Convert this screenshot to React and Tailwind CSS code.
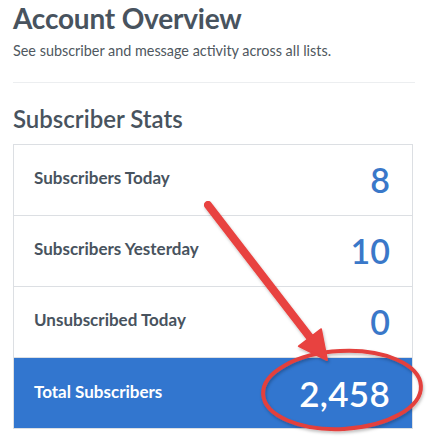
import React from 'react';

const rows = [
  { label: 'Subscribers Today', value: '8' },
  { label: 'Subscribers Yesterday', value: '10' },
  { label: 'Unsubscribed Today', value: '0' },
];

const App = () => {
  return (
    <div className="relative w-[428px] h-[442px] overflow-hidden bg-white font-['Lato',sans-serif] text-[#48535e]">
      <div className="px-[13px]">
        <h1 className="text-[28px] leading-[36px] font-bold tracking-[-0.2px]">Account Overview</h1>
        <p className="mt-[5px] text-[14.4px] leading-[20px] text-[#4f5860]">
          See subscriber and message activity across all lists.
        </p>
        <hr className="mt-[21px] border-0 border-t border-[#eceef0]" />
        <h2 className="mt-[22px] text-[24px] leading-[28px] font-semibold">Subscriber Stats</h2>

        <div className="mt-[11px] w-[400px] border border-[#dcdfe3]">
          {rows.map((row) => (
            <div
              key={row.label}
              className="flex h-[71px] items-center justify-between border-b border-[#dcdfe3] pl-[20px] pr-[22px]"
            >
              <span className="text-[17px] font-bold pb-[4px]">{row.label}</span>
              <span className="text-[34px] leading-none font-semibold text-[#3a78c9]">{row.value}</span>
            </div>
          ))}
          <div className="flex h-[70px] items-center justify-between bg-[#3276cf] pl-[20px] pr-[22px] text-white">
            <span className="text-[17px] font-bold pb-[2px]">Total Subscribers</span>
            <span className="text-[35px] leading-none font-semibold tracking-[0.3px]">2,458</span>
          </div>
        </div>
      </div>

      <svg className="pointer-events-none absolute inset-0" width="428" height="442" viewBox="0 0 428 442">
        <defs>
          <filter id="shadow" x="-20%" y="-20%" width="140%" height="140%">
            <feDropShadow dx="1" dy="2" stdDeviation="1.5" floodColor="#000" floodOpacity="0.25" />
          </filter>
        </defs>
        <g filter="url(#shadow)">
          <ellipse
            cx="342"
            cy="390"
            rx="79"
            ry="39"
            transform="rotate(-3 342 390)"
            fill="none"
            stroke="#e3403d"
            strokeWidth="4"
          />
          <line x1="208" y1="205" x2="312" y2="340" stroke="#e8423f" strokeWidth="8" strokeLinecap="round" />
          <polygon points="327,360 298.8,346.2 321,329.2" fill="#e8423f" stroke="#e8423f" strokeWidth="2" strokeLinejoin="round" />
        </g>
      </svg>
    </div>
  );
};

export default App;
